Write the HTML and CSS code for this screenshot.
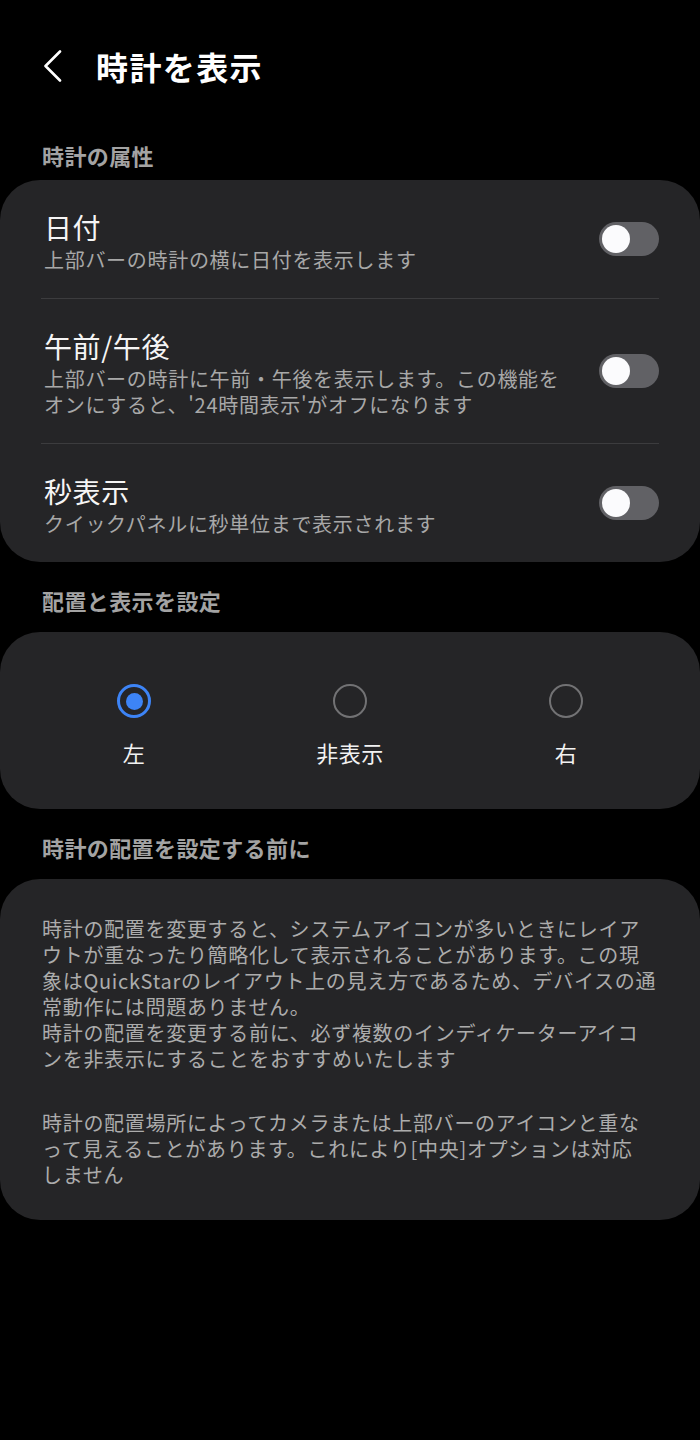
FILE: index.html
```html
<!DOCTYPE html>
<html lang="ja">
<head>
<meta charset="utf-8">
<title>時計を表示</title>
<link rel="stylesheet" href="styles.css">
</head>
<body>
<header class="appbar">
  <svg class="back" width="20" height="32" viewBox="0 0 20 32" aria-hidden="true">
    <polyline points="17,1.5 2.5,16 17,30.5" fill="none" stroke="#ffffff" stroke-width="2.6" stroke-linecap="round" stroke-linejoin="round"/>
  </svg>
  <h1 class="title">時計を表示</h1>
</header>

<h2 class="section-label first">時計の属性</h2>
<section class="card list">
  <div class="row">
    <div class="row-text">
      <div class="row-title">日付</div>
      <div class="row-sub">上部バーの時計の横に日付を表示します</div>
    </div>
    <span class="toggle"><span class="knob"></span></span>
  </div>
  <div class="divider"></div>
  <div class="row">
    <div class="row-text">
      <div class="row-title">午前/午後</div>
      <div class="row-sub">上部バーの時計に午前・午後を表示します。この機能を<br>オンにすると、'24時間表示'がオフになります</div>
    </div>
    <span class="toggle"><span class="knob"></span></span>
  </div>
  <div class="divider"></div>
  <div class="row">
    <div class="row-text">
      <div class="row-title">秒表示</div>
      <div class="row-sub">クイックパネルに秒単位まで表示されます</div>
    </div>
    <span class="toggle"><span class="knob"></span></span>
  </div>
</section>

<h2 class="section-label">配置と表示を設定</h2>
<section class="card radios">
  <div class="option">
    <span class="radio on"><span class="dot"></span></span>
    <span class="option-label">左</span>
  </div>
  <div class="option">
    <span class="radio"></span>
    <span class="option-label">非表示</span>
  </div>
  <div class="option">
    <span class="radio"></span>
    <span class="option-label">右</span>
  </div>
</section>

<h2 class="section-label">時計の配置を設定する前に</h2>
<section class="card notes">
  <p class="note">時計の配置を変更すると、システムアイコンが多いときにレイア<br>ウトが重なったり簡略化して表示されることがあります。この現<br>象はQuickStarのレイアウト上の見え方であるため、デバイスの通<br>常動作には問題ありません。<br>時計の配置を変更する前に、必ず複数のインディケーターアイコ<br>ンを非表示にすることをおすすめいたします</p>
  <p class="note">時計の配置場所によってカメラまたは上部バーのアイコンと重な<br>って見えることがあります。これにより[中央]オプションは対応<br>しません</p>
</section>
</body>
</html>
```

FILE: styles.css
```css
* { box-sizing: border-box; }

html, body {
  margin: 0;
  padding: 0;
  background: #000000;
}

body {
  width: 700px;
  min-height: 1440px;
  font-family: "Noto Sans CJK JP", "Noto Sans", "Liberation Sans", sans-serif;
  color: #ffffff;
}

.appbar {
  display: flex;
  align-items: center;
  padding: 40px 0 0 43px;
  height: 92px;
}

.back {
  display: block;
  flex: none;
  margin-right: 33px;
}

.title {
  margin: 0;
  font-size: 32px;
  line-height: 52px;
  font-weight: 700;
  letter-spacing: 1.4px;
  color: #ffffff;
}

.section-label {
  margin: 23px 0 17px;
  padding-left: 42px;
  font-size: 22px;
  line-height: 30px;
  font-weight: 700;
  letter-spacing: 0.4px;
  color: #a3a3a3;
}

.section-label.first {
  margin-top: 48px;
  margin-bottom: 10px;
}

.card {
  background: #252527;
  border-radius: 40px;
}

.list {
  padding: 0 41px;
}

.row {
  display: flex;
  align-items: center;
  justify-content: space-between;
  padding: 30px 0 25px 3px;
}

.row-title {
  font-size: 28px;
  line-height: 34px;
  color: #f5f5f5;
  letter-spacing: 0.6px;
}

.row-sub {
  margin-top: 3px;
  font-size: 20px;
  line-height: 26px;
  letter-spacing: 0.7px;
  color: #a8a8a8;
  white-space: nowrap;
}

.divider {
  height: 1px;
  background: #3c3c3e;
}

.toggle {
  flex: none;
  position: relative;
  width: 60px;
  height: 34px;
  margin-bottom: 5px;
  border-radius: 17px;
  background: #616165;
}

.knob {
  position: absolute;
  left: 3px;
  top: 3px;
  width: 28px;
  height: 28px;
  border-radius: 50%;
  background: #fbfbfd;
}

.radios {
  display: grid;
  grid-template-columns: repeat(3, 1fr);
  padding: 52px 26px 42px;
}

.option {
  display: flex;
  flex-direction: column;
  align-items: center;
  gap: 19px;
}

.radio {
  display: flex;
  align-items: center;
  justify-content: center;
  width: 34px;
  height: 34px;
  border-radius: 50%;
  border: 2.5px solid #727274;
}

.radio.on {
  border: 3px solid #3d84f6;
}

.dot {
  width: 17px;
  height: 17px;
  border-radius: 50%;
  background: #3d84f6;
}

.option-label {
  font-size: 22px;
  line-height: 30px;
  color: #f2f2f2;
  letter-spacing: 0.5px;
}

.notes {
  padding: 37px 20px 32px 42px;
}

.note {
  margin: 0;
  font-size: 20px;
  line-height: 26px;
  letter-spacing: 0.7px;
  color: #acacac;
  white-space: nowrap;
}

.note + .note {
  margin-top: 38px;
}
```
